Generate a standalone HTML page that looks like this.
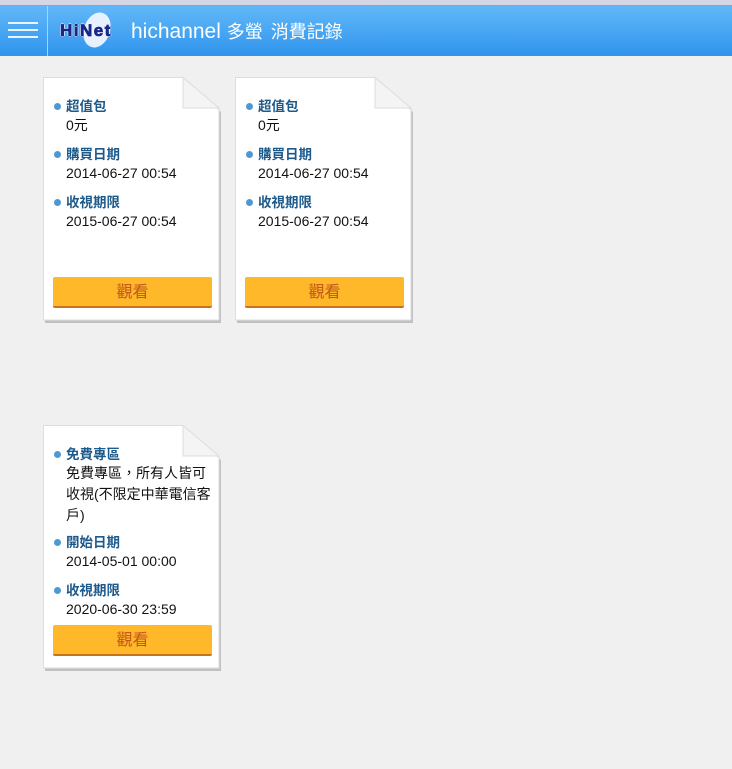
<!DOCTYPE html>
<html><head><meta charset="utf-8"><style>
*{margin:0;padding:0;box-sizing:border-box}
body{width:732px;height:769px;background:#f0f0f0;position:relative;overflow:hidden;font-family:"Liberation Sans","Noto Sans CJK TC",sans-serif}
.top{position:absolute;left:0;top:0;width:732px;height:6px;background:#d4d6e4;border-bottom:1px solid #8aa0d8}
.hdr{position:absolute;left:0;top:6px;width:732px;height:50px;background:linear-gradient(#62b8f7,#2f94ee)}
.menu{position:absolute;left:0;top:0;width:48px;height:50px;border-right:1px solid #a8d4f8}
.menu i{position:absolute;left:8px;width:30px;height:2px;background:#e8f4ff}
.bub{position:absolute;left:84px;top:6px;width:26px;height:36px;border-radius:50%;background:#e6f0ff;transform:rotate(20deg)}
.logo{position:absolute;left:60px;top:15px;font:900 17px "Liberation Sans",sans-serif;color:#17288a;letter-spacing:1.5px;-webkit-text-stroke:0.8px #17288a;text-shadow:1px 0 #fff,-1px 0 #fff,0 1px #fff,0 -1px #fff}
.ttl{position:absolute;left:131px;top:12px;color:#fff;font-size:21px;white-space:nowrap}
.ttl b{font-weight:normal;font-size:18px}
.ttl span{font-size:18px;margin-left:8px}
.card{position:absolute;width:177px;height:244px}
.card svg{position:absolute;left:0;top:0}
.t{position:absolute;left:23px;font-size:14px;line-height:19px;color:#111;white-space:nowrap}
.l{color:#1d5a8c;font-weight:bold;font-size:13.5px}
.l:before{content:"";position:absolute;left:-12px;top:6px;width:7px;height:7px;border-radius:50%;background:#4a9ad6}
.btn{position:absolute;left:10px;width:159px;height:31px;background:#feb82a;border-bottom:2px solid #c8731a;border-radius:2px;color:#c2561c;font-size:16px;text-align:center;line-height:31px}
</style></head><body>
<div class="top"></div>
<div class="hdr">
<div class="menu"><i style="top:16px"></i><i style="top:23px"></i><i style="top:30px"></i></div>
<div class="bub"></div>
<div class="logo">HiNet</div>
<div class="ttl">hichannel <b>多螢</b><span>消費記錄</span></div>
</div>

<div class="card" style="left:43px;top:77px">
<svg width="180" height="248"><path d="M2 2H141L178 35V246H2Z" fill="#888" opacity=".45"/><path d="M0.5 0.5H140L176 33V243H0.5Z" fill="#fff" stroke="#ddd"/><path d="M140 0.5V31H176Z" fill="#f4f4f4" stroke="#ddd"/></svg>
<div class="t l" style="top:20px">超值包</div><div class="t" style="top:39px">0元</div>
<div class="t l" style="top:68px">購買日期</div><div class="t" style="top:87px">2014-06-27 00:54</div>
<div class="t l" style="top:116px">收視期限</div><div class="t" style="top:135px">2015-06-27 00:54</div>
<div class="btn" style="top:200px">觀看</div>
</div>

<div class="card" style="left:235px;top:77px">
<svg width="180" height="248"><path d="M2 2H141L178 35V246H2Z" fill="#888" opacity=".45"/><path d="M0.5 0.5H140L176 33V243H0.5Z" fill="#fff" stroke="#ddd"/><path d="M140 0.5V31H176Z" fill="#f4f4f4" stroke="#ddd"/></svg>
<div class="t l" style="top:20px">超值包</div><div class="t" style="top:39px">0元</div>
<div class="t l" style="top:68px">購買日期</div><div class="t" style="top:87px">2014-06-27 00:54</div>
<div class="t l" style="top:116px">收視期限</div><div class="t" style="top:135px">2015-06-27 00:54</div>
<div class="btn" style="top:200px">觀看</div>
</div>

<div class="card" style="left:43px;top:425px">
<svg width="180" height="248"><path d="M2 2H141L178 35V246H2Z" fill="#888" opacity=".45"/><path d="M0.5 0.5H140L176 33V243H0.5Z" fill="#fff" stroke="#ddd"/><path d="M140 0.5V31H176Z" fill="#f4f4f4" stroke="#ddd"/></svg>
<div class="t l" style="top:20px">免費專區</div>
<div class="t" style="top:38px;line-height:21px">免費專區，所有人皆可<br>收視(不限定中華電信客<br>戶)</div>
<div class="t l" style="top:108px">開始日期</div><div class="t" style="top:127px">2014-05-01 00:00</div>
<div class="t l" style="top:156px">收視期限</div><div class="t" style="top:175px">2020-06-30 23:59</div>
<div class="btn" style="top:200px">觀看</div>
</div>
</body></html>
